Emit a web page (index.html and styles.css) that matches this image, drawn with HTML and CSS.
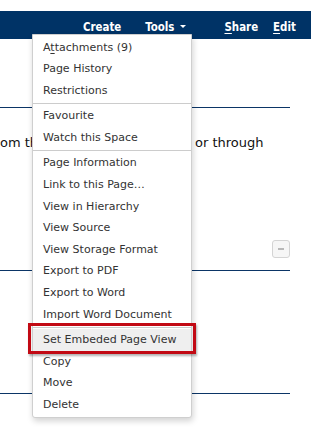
FILE: index.html
```html
<!DOCTYPE html>
<html>
<head>
<meta charset="utf-8">
<link rel="stylesheet" href="styles.css">
</head>
<body>
<div class="frame">
  <div class="topbar">
    <span class="nav nav-create">Create</span>
    <span class="nav nav-tools">Tools <span class="caret"></span></span>
    <span class="nav nav-share"><u>S</u>hare</span>
    <span class="nav nav-edit"><u>E</u>dit</span>
  </div>
  <div class="page">
    <div class="rule rule-a"></div>
    <div class="textline"><span>om th</span><span>or through</span></div>
    <div class="btnrow"><span class="minus-btn"><span class="dash"></span></span></div>
    <div class="rule rule-b"></div>
    <div class="rule rule-c"></div>
  </div>
  <div class="dropdown">
    <div class="group">
      <div class="item">A<u>t</u>tachments (9)</div>
      <div class="item">Page History</div>
      <div class="item">Restrictions</div>
    </div>
    <div class="group">
      <div class="item">Favourite</div>
      <div class="item">Watch this Space</div>
    </div>
    <div class="group">
      <div class="item">Page Information</div>
      <div class="item">Link to this Page…</div>
      <div class="item">View in Hierarchy</div>
      <div class="item">View Source</div>
      <div class="item">View Storage Format</div>
      <div class="item">Export to PDF</div>
      <div class="item">Export to Word</div>
      <div class="item">Import Word Document</div>
    </div>
    <div class="group">
      <div class="item item-hl">Set Embeded Page View</div>
      <div class="item">Copy</div>
      <div class="item">Move</div>
      <div class="item">Delete</div>
    </div>
  </div>
</div>
</body>
</html>
```
FILE: styles.css
```css
html, body {
  margin: 0;
  padding: 0;
  background: #fff;
}
body {
  font-family: "DejaVu Sans", Verdana, sans-serif;
  width: 330px;
  height: 435px;
  overflow: hidden;
}
.frame {
  position: relative;
  width: 330px;
  height: 435px;
  box-sizing: border-box;
  padding-top: 11px;
}
.topbar {
  width: 311px;
  height: 28px;
  background: #003366;
  display: flex;
  align-items: center;
  color: #fff;
  box-sizing: border-box;
  padding-top: 3px;
  font-family: "DejaVu Sans Condensed", "DejaVu Sans", sans-serif;
  font-stretch: condensed;
  font-weight: bold;
  font-size: 11.4px;
}
.nav { white-space: nowrap; }
.nav u { text-decoration-thickness: 1px; text-underline-offset: 2px; }
.nav-create { margin-left: 83px; }
.nav-tools { margin-left: 24px; display: flex; align-items: center; gap: 2px; }
.nav-share { margin-left: 38px; }
.nav-edit { margin-left: 15px; }
.caret {
  display: inline-block;
  width: 0;
  height: 0;
  margin-left: 4px;
  border-left: 3px solid transparent;
  border-right: 3px solid transparent;
  border-top: 3px solid #fff;
}
.page {
  width: 290px;
  display: flex;
  flex-direction: column;
}
.rule {
  height: 1px;
  background: #0b3566;
}
.rule-a { margin-top: 68px; }
.textline {
  margin-top: 25px;
  display: grid;
  grid-template-columns: 195px auto;
  font-size: 13px;
  line-height: 20px;
  color: #111;
  white-space: nowrap;
}
.btnrow {
  margin-top: 87px;
  display: flex;
  justify-content: flex-end;
}
.minus-btn {
  width: 16px;
  height: 16px;
  border: 1px solid #d4d4d4;
  border-radius: 3px;
  background: #f6f6f6;
  display: flex;
  align-items: center;
  justify-content: center;
}
.dash {
  width: 6px;
  height: 2px;
  background: #b8b8b8;
}
.rule-b { margin-top: 12px; }
.rule-c { margin-top: 122px; }

.dropdown {
  position: absolute;
  left: 32px;
  top: 34px;
  width: 158px;
  background: #fff;
  border: 1px solid #cfcfcf;
  border-radius: 0 0 3px 3px;
  box-shadow: 1px 3px 6px rgba(0,0,0,0.18);
  z-index: 5;
  font-size: 11px;
  color: #333;
}
.group {
  padding: 1.5px 0;
}
.group + .group {
  border-top: 1px solid #cccccc;
}
.item {
  height: 21.6px;
  line-height: 22.6px;
  padding-left: 10px;
  white-space: nowrap;
}
.item u { text-underline-offset: 2px; }
.item-hl {
  position: relative;
  background: #efefef;
}
.item-hl::after {
  content: "";
  position: absolute;
  left: -5px;
  right: -5px;
  top: -6px;
  bottom: -3px;
  border: 3px solid #c20a14;
  box-shadow: 1px 2px 2px rgba(0,0,0,0.3);
}
```
